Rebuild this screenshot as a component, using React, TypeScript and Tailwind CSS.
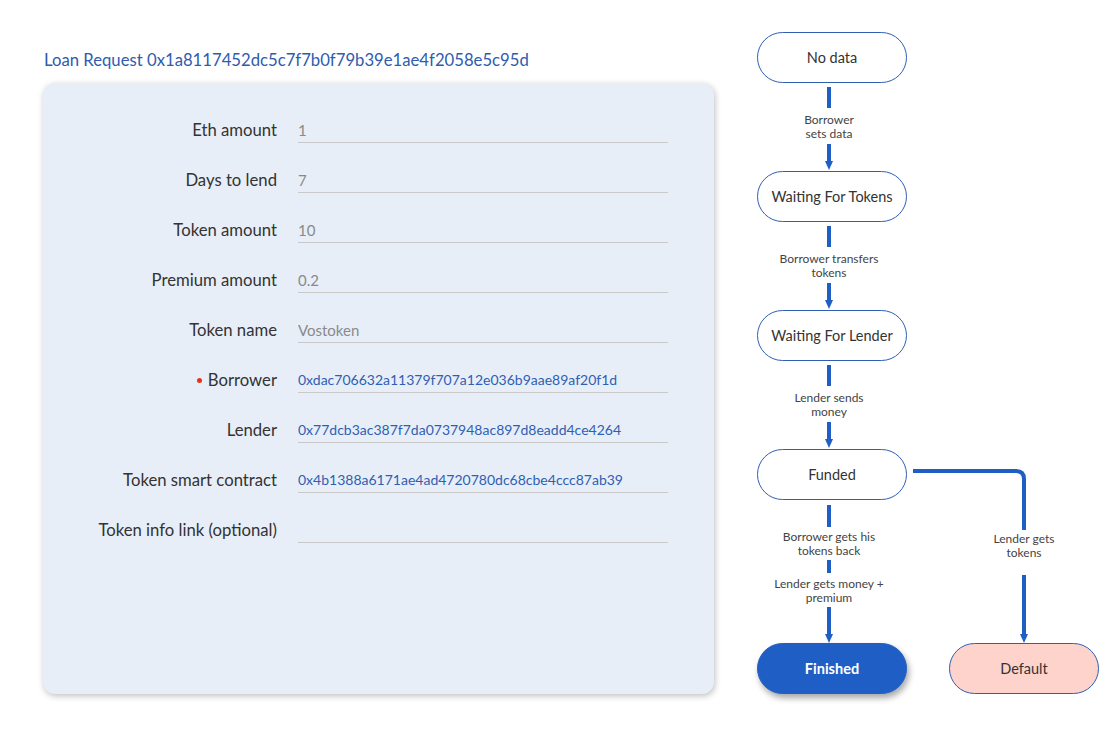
const fields = [
  { label: 'Eth amount', value: '1' },
  { label: 'Days to lend', value: '7' },
  { label: 'Token amount', value: '10' },
  { label: 'Premium amount', value: '0.2' },
  { label: 'Token name', value: 'Vostoken' },
  { label: 'Borrower', value: '0xdac706632a11379f707a12e036b9aae89af20f1d', address: true, required: true },
  { label: 'Lender', value: '0x77dcb3ac387f7da0737948ac897d8eadd4ce4264', address: true },
  { label: 'Token smart contract', value: '0x4b1388a6171ae4ad4720780dc68cbe4ccc87ab39', address: true },
  { label: 'Token info link (optional)', value: '' },
];

const BLUE = '#1f5fc5';

function StateNode({ text, variant = 'plain' }: { text: string; variant?: 'plain' | 'done' | 'fail' }) {
  const cls =
    variant === 'done'
      ? 'bg-[#1f5fc5] text-white font-bold border-[#1f5fc5] shadow-[2px_4px_6px_rgba(0,0,0,0.35)]'
      : variant === 'fail'
        ? 'bg-[#fdd3cc] text-[#333] border-[#2f5fb3]'
        : 'bg-white text-[#333] border-[#2f5fb3]';
  return (
    <div className={`w-[150px] h-[51px] shrink-0 rounded-full border flex items-center justify-center text-[14.5px] ${cls}`}>
      {text}
    </div>
  );
}

function Line({ h }: { h: number }) {
  return <div className="w-[4px] bg-[#1f5fc5] shrink-0" style={{ height: h }} />;
}

function Arrow({ h }: { h: number }) {
  return (
    <svg width="10" height={h} className="shrink-0">
      <rect x="3" y="0" width="4" height={h - 8} fill={BLUE} />
      <path d={`M1 ${h - 9} L9 ${h - 9} L5 ${h} Z`} fill={BLUE} />
    </svg>
  );
}

function Label({ lines }: { lines: string[] }) {
  return (
    <div className="h-[28px] text-center text-[12px] leading-[14px] text-[#444] whitespace-nowrap shrink-0">
      {lines.map((l) => (
        <div key={l}>{l}</div>
      ))}
    </div>
  );
}

function Step({ lines }: { lines: string[] }) {
  return (
    <div className="h-[88px] flex flex-col items-center pt-[4px] pr-[6px]">
      <Line h={21} />
      <div className="h-[5px]" />
      <Label lines={lines} />
      <div className="h-[3px]" />
      <Arrow h={26} />
    </div>
  );
}

function Flow() {
  return (
    <div className="flex pt-[32px] pl-[43px]">
      <div className="w-[150px] flex flex-col items-center">
        <StateNode text="No data" />
        <Step lines={['Borrower', 'sets data']} />
        <StateNode text="Waiting For Tokens" />
        <Step lines={['Borrower transfers', 'tokens']} />
        <StateNode text="Waiting For Lender" />
        <Step lines={['Lender sends', 'money']} />
        <StateNode text="Funded" />
        <div className="h-[143px] flex flex-col items-center pt-[5px] pr-[6px]">
          <Line h={22} />
          <div className="h-[3px]" />
          <Label lines={['Borrower gets his', 'tokens back']} />
          <div className="h-[2px]" />
          <Line h={13} />
          <div className="h-[4px]" />
          <Label lines={['Lender gets money +', 'premium']} />
          <div className="h-[2px]" />
          <Arrow h={36} />
        </div>
        <StateNode text="Finished" variant="done" />
      </div>
      <div className="w-[192px] flex flex-col pt-[437px]">
        <svg width="192" height="61">
          <path d="M6 2 L109 2 Q117 2 117 10 L117 61" stroke={BLUE} strokeWidth="4" fill="none" />
        </svg>
        <div className="ml-[42px] w-[150px] flex flex-col items-center">
          <div className="h-[2px]" />
          <Label lines={['Lender gets', 'tokens']} />
          <div className="h-[15px]" />
          <Arrow h={68} />
          <StateNode text="Default" variant="fail" />
        </div>
      </div>
    </div>
  );
}

export default function App() {
  return (
    <div className="min-h-screen bg-white flex font-['Lato','Open_Sans',sans-serif]">
      <div className="pl-[43px] w-[714px] shrink-0">
        <h1 className="text-[16.7px] leading-[20px] text-[#2e5cae] pt-[50px] pl-[1px]">
          Loan Request 0x1a8117452dc5c7f7b0f79b39e1ae4f2058e5c95d
        </h1>
        <div className="mt-[13px] w-[671px] h-[611px] bg-[#e7eef8] rounded-[12px] shadow-[1px_2px_6px_rgba(0,0,0,0.25)] pt-[22px]">
          {fields.map((f) => (
            <div key={f.label} className="grid grid-cols-[234px_370px] gap-x-[21px] items-center h-[50px]">
              <label className="text-[16.7px] text-[#333] flex items-center justify-end whitespace-nowrap pt-[1px]">
                {f.required && <span className="w-[5px] h-[5px] rounded-full bg-[#e3331c] mr-[6px]" />}
                {f.label}
              </label>
              <input
                readOnly
                value={f.value}
                className={`h-[26px] bg-transparent border-b border-[#c9c9c9] outline-none ${
                  f.address ? 'text-[14px] text-[#2f5fb3]' : 'text-[15px] text-[#8a8a8a]'
                }`}
              />
            </div>
          ))}
        </div>
      </div>
      <Flow />
    </div>
  );
}
